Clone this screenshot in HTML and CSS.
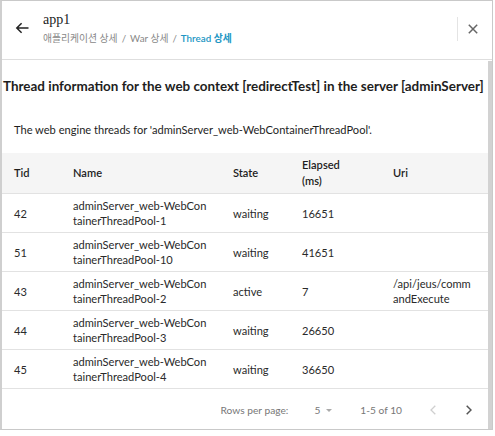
FILE: index.html
```html
<!DOCTYPE html>
<html>
<head>
<meta charset="utf-8">
<link rel="stylesheet" href="styles.css">
</head>
<body>
<div class="dialog">
  <header class="header">
    <button class="back" aria-label="back">
      <svg width="14" height="12" viewBox="0 0 14 12"><path d="M13.5 6H1.8M6.6 1.2L1.8 6l4.8 4.8" fill="none" stroke="#222" stroke-width="1.5"/></svg>
    </button>
    <div class="titles">
      <div class="app">app1</div>
      <nav class="crumbs">
        <span>애플리케이션 상세</span><span class="sep">/</span><span>War 상세</span><span class="sep">/</span><span class="current">Thread 상세</span>
      </nav>
    </div>
    <div class="divider"></div>
    <button class="close" aria-label="close">
      <svg width="10" height="10" viewBox="0 0 10 10"><path d="M0.8 0.8l8.4 8.4M9.2 0.8L0.8 9.2" stroke="#666" stroke-width="1.5"/></svg>
    </button>
  </header>
  <div class="body">
    <main class="content">
      <h1 class="title">Thread information for the web context [redirectTest] in the server [adminServer]</h1>
      <p class="sub">The web engine threads for 'adminServer_web-WebContainerThreadPool'.</p>
      <div class="grid" role="table">
        <div class="row head" role="row">
          <div class="cell" role="columnheader">Tid</div>
          <div class="cell" role="columnheader">Name</div>
          <div class="cell" role="columnheader">State</div>
          <div class="cell el" role="columnheader">Elapsed (ms)</div>
          <div class="cell" role="columnheader">Uri</div>
        </div>
        <div class="row" role="row">
          <div class="cell">42</div><div class="cell">adminServer_web-WebContainerThreadPool-1</div><div class="cell">waiting</div><div class="cell">16651</div><div class="cell uri"></div>
        </div>
        <div class="row" role="row">
          <div class="cell">51</div><div class="cell">adminServer_web-WebContainerThreadPool-10</div><div class="cell">waiting</div><div class="cell">41651</div><div class="cell uri"></div>
        </div>
        <div class="row" role="row">
          <div class="cell">43</div><div class="cell">adminServer_web-WebContainerThreadPool-2</div><div class="cell">active</div><div class="cell">7</div><div class="cell uri">/api/jeus/commandExecute</div>
        </div>
        <div class="row" role="row">
          <div class="cell">44</div><div class="cell">adminServer_web-WebContainerThreadPool-3</div><div class="cell">waiting</div><div class="cell">26650</div><div class="cell uri"></div>
        </div>
        <div class="row" role="row">
          <div class="cell">45</div><div class="cell">adminServer_web-WebContainerThreadPool-4</div><div class="cell">waiting</div><div class="cell">36650</div><div class="cell uri"></div>
        </div>
      </div>
      <div class="pager">
        <span class="rpp">Rows per page:</span>
        <span class="sel">5<span class="caret"></span></span>
        <span class="range">1-5 of 10</span>
        <span class="nav">
          <svg width="6" height="10" viewBox="0 0 6 10"><path d="M5.3 0.7L1 5l4.3 4.3" fill="none" stroke="#cfcfcf" stroke-width="1.3"/></svg>
          <svg width="6" height="10" viewBox="0 0 6 10"><path d="M0.7 0.7L5 5 0.7 9.3" fill="none" stroke="#555" stroke-width="1.5"/></svg>
        </span>
      </div>
    </main>
    <div class="scrollbar"></div>
  </div>
</div>
</body>
</html>
```

FILE: styles.css
```css
* { box-sizing: border-box; }
html, body { margin: 0; padding: 0; background: #fff; }
body { font-family: Lato, "Noto Sans CJK KR", sans-serif; color: #222; }
.dialog {
  width: 493px;
  height: 430px;
  border: 1px solid #c9c9c9;
  border-left: 2px solid #cfcfcf;
  display: flex;
  flex-direction: column;
  overflow: hidden;
}
.header {
  height: 59px;
  flex: none;
  display: flex;
  align-items: flex-start;
  border-bottom: 1px solid #dedede;
}
button { background: none; border: 0; padding: 0; margin: 0; cursor: pointer; display: flex; }
.back { margin: 21px 14px 0 13px; }
.titles { flex: 1; display: flex; flex-direction: column; padding-top: 11px; }
.app { font-family: "Liberation Serif", serif; font-size: 14px; line-height: 16px; color: #222; }
.crumbs { font-size: 9.8px; line-height: 14px; color: #888; margin-top: 3px; }
.crumbs .sep { margin: 0 4px; }
.crumbs .current { color: #2196c4; font-weight: 600; }
.divider { width: 1px; height: 24px; background: #e4e4e4; margin: 16px 10px 0 0; }
.close { margin: 23px 14px 0 0; }
.body { flex: 1; display: flex; min-height: 0; }
.content { flex: 1; min-width: 0; display: flex; flex-direction: column; }
.scrollbar { width: 4px; background: #d2d2d2; margin-top: 1px; }
.title {
  margin: 18px 0 0 1px;
  font-size: 13.45px;
  line-height: 16px;
  font-weight: 700;
  color: #1e1e1e;
  white-space: nowrap;
}
.sub { margin: 29px 0 0 12px; font-size: 11.1px; line-height: 14px; color: #1e1e1e; }
.grid { margin-top: 16px; font-size: 11.1px; color: #2a2a2a; }
.row {
  display: grid;
  grid-template-columns: 59px 160px 69px 91px 107px;
  height: 39px;
  border-bottom: 1px solid #e2e2e2;
}
.row.head { height: 41px; background: #f5f5f5; color: #1e1e1e; font-weight: 600; }
.cell {
  display: flex;
  align-items: center;
  padding: 0 13px 0 12px;
  line-height: 15px;
  word-break: break-all;
  overflow-wrap: anywhere;
}
.head .cell { line-height: 16px; }
.head .el { padding-right: 35px; }
.cell.uri { padding-right: 16px; }
.pager {
  display: flex;
  align-items: center;
  justify-content: flex-end;
  height: 40px;
  font-size: 10.2px;
  color: #777;
  padding-top: 2px;
}
.rpp { margin-right: 26px; }
.sel { display: flex; align-items: center; margin-right: 28px; }
.caret { width: 0; height: 0; border-left: 3px solid transparent; border-right: 3px solid transparent; border-top: 3px solid #aaa; margin-left: 6px; }
.range { margin-right: 28px; }
.nav { display: flex; gap: 30px; margin-right: 16px; }
```
